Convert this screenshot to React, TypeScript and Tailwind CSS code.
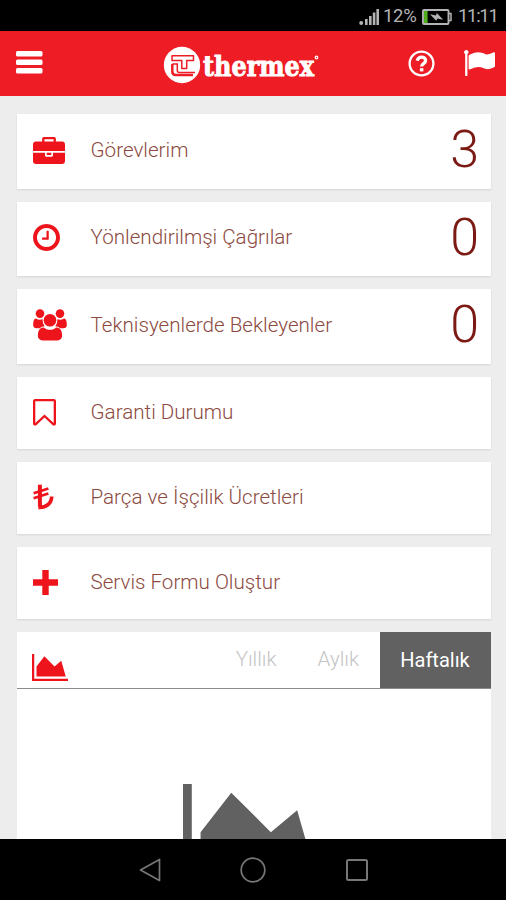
import type { ReactNode } from "react";

interface MenuItem {
  label: string;
  icon: ReactNode;
  count?: number;
}

const BriefcaseIcon = () => (
  <svg width="32" height="27" viewBox="0 0 1792 1536" preserveAspectRatio="none" fill="currentColor">
    <path d="M640 256h512v-128h-512v128zm1152 640v480q0 66-47 113t-113 47h-1472q-66 0-113-47t-47-113v-480h672v160q0 26 19 45t45 19h320q26 0 45-19t19-45v-160h672zm-768 0v128h-256v-128h256zm768-480v384h-1792v-384q0-66 47-113t113-47h352v-160q0-40 28-68t68-28h576q40 0 68 28t28 68v160h352q66 0 113 47t47 113z" />
  </svg>
);

const ClockIcon = () => (
  <svg width="27" height="27" viewBox="128 128 1536 1536" fill="currentColor">
    <path d="M1024 544v448q0 14-9 23t-23 9h-320q-14 0-23-9t-9-23v-64q0-14 9-23t23-9h224v-352q0-14 9-23t23-9h64q14 0 23 9t9 23zm416 352q0-148-73-273t-198-198-273-73-273 73-198 198-73 273 73 273 198 198 273 73 273-73 198-198 73-273zm224 0q0 209-103 385.5t-279.5 279.5-385.5 103-385.5-103-279.5-279.5-103-385.5 103-385.5 279.5-279.5 385.5-103 385.5 103 279.5 279.5 103 385.5z" />
  </svg>
);

const UsersIcon = () => (
  <svg width="34" height="32" viewBox="0 0 34 32" fill="currentColor">
    <circle cx="7" cy="4.6" r="4.3" />
    <circle cx="27" cy="4.6" r="4.3" />
    <circle cx="17" cy="11.3" r="6.3" />
    <path d="M3 9.6C4.200 10.400 5.600 10.800 7 10.800c1 0 1.900-.2 2.700-.5-.2 2.600.5 5 2.100 6.900-2 .1-3.700.8-5 2H3.600C1.500 19.200.2 18.100.2 16.200.2 13.600.6 9.300 3 9.600z" />
    <path d="M31 9.600c-1.200.8-2.600 1.200-4 1.200-1 0-1.900-.2-2.700-.5.2 2.600-.5 5-2.100 6.900 2 .1 3.700.8 5 2h3.200c2.100 0 3.400-1.100 3.400-3 0-2.600-.4-6.900-2.800-6.600z" />
    <path d="M10.800 18.500c1.700 1.500 3.800 2.300 6.200 2.300s4.500-.8 6.200-2.300c4.400-.2 5.900 4 5.900 8.300 0 2.800-1.800 4.600-4.700 4.600H9.600c-2.900 0-4.700-1.800-4.700-4.600 0-4.300 1.500-8.500 5.900-8.300z" />
  </svg>
);

const BookmarkIcon = () => (
  <svg width="23" height="27" viewBox="256 128 1280 1536" preserveAspectRatio="none" fill="currentColor">
    <path d="M1408 256h-1024v1242l423-406 89-85 89 85 423 406v-1242zm12-128q23 0 44 9 33 13 52.500 41t19.500 62v1289q0 34-19.500 62t-52.500 41q-19 8-44 8-48 0-83-32l-441-424-441 424q-36 33-83 33-23 0-44-9-33-13-52.500-41t-19.500-62v-1289q0-34 19.500-62t52.500-41q21-9 44-9h1048z" />
  </svg>
);

const LiraIcon = () => (
  <svg width="21" height="26" viewBox="0 0 21 26" fill="none" stroke="currentColor">
    <path d="M6.900.7v22" strokeWidth="4" />
    <path d="M5.400 23.300C13 23.800 18.600 19.500 18.700 12.500" strokeWidth="3.700" />
    <path d="M.6 9.300L15.400 4.600M.6 14.200L15.400 9.500" strokeWidth="2.600" />
  </svg>
);

const PlusIcon = () => (
  <svg width="25" height="25" viewBox="0 0 25 25" fill="currentColor">
    <path d="M9.300 0h6.400v9.300H25v6.400h-9.300V25H9.300v-9.300H0V9.300h9.300z" />
  </svg>
);

const AreaChartIcon = ({ className }: { className: string }) => (
  <svg className={className} viewBox="0 128 2048 1536" preserveAspectRatio="none" fill="currentColor">
    <path d="M2048 1536v128h-2048v-1536h128v1408h1920zm-384-1024l256 896h-1664v-576l448-576 576 576z" />
  </svg>
);

const counters: MenuItem[] = [
  { label: "Görevlerim", icon: <BriefcaseIcon />, count: 3 },
  { label: "Yönlendirilmşi Çağrılar", icon: <ClockIcon />, count: 0 },
  { label: "Teknisyenlerde Bekleyenler", icon: <UsersIcon />, count: 0 },
];

const links: MenuItem[] = [
  { label: "Garanti Durumu", icon: <BookmarkIcon /> },
  { label: "Parça ve İşçilik Ücretleri", icon: <LiraIcon /> },
  { label: "Servis Formu Oluştur", icon: <PlusIcon /> },
];

function StatusBar() {
  return (
    <div className="flex h-[31px] items-center justify-end bg-black pr-[8px] pt-[2px] text-[#b4b4b4]">
      <svg width="21" height="18" viewBox="0 0 21 18" fill="currentColor">
        <circle cx="2.200" cy="15" r="2" />
        <path d="M6 11h2.600v6H6zM10 8h2.600v9H10zM13.800 4.500h2.600V17h-2.600zM17.400 1H20v16h-2.600z" />
      </svg>
      <span className="ml-[3px] w-[35px] text-[18.500px] leading-none tracking-[-0.3px]">12%</span>
      <svg className="ml-[4px]" width="30" height="16" viewBox="0 0 30 16">
        <rect x="1" y="1" width="25.500" height="14" rx="1" fill="none" stroke="currentColor" strokeWidth="1.900" />
        <path d="M27 4.500h2v7h-2" fill="none" stroke="currentColor" strokeWidth="1.500" />
        <path d="M2 2h3.600v12H2z" fill="#4fae1c" />
        <path d="M8 5.200l6 1.300.8-2.600 6.400 6.800-5.800-1.300-1.200 2.300z" fill="currentColor" />
      </svg>
      <span className="ml-[6px] w-[40px] whitespace-nowrap text-[18.500px] leading-none tracking-[-1.300px]">11:11</span>
    </div>
  );
}

function Header() {
  return (
    <header className="flex h-[65px] items-center bg-[#ee1c25] pl-[16px] pr-[11px] text-white">
      <svg className="mb-[2px]" width="27" height="23" viewBox="0 0 27 23" fill="currentColor">
        <rect y="0" width="26.500" height="5.500" rx="1.500" />
        <rect y="8.500" width="26.500" height="5.500" rx="1.500" />
        <rect y="17" width="26.500" height="5.500" rx="1.500" />
      </svg>
      <div className="ml-[120px] mt-[2px] flex h-[38px] items-center">
        <svg width="38" height="38" viewBox="0 0 38 38">
          <circle cx="19" cy="19" r="18.200" fill="currentColor" />
          <g fill="none" stroke="#ee1c25">
            <path d="M9 9.800h21.500v4.700h-6.800v8h-4.900v-8H9z" strokeWidth="1.500" strokeLinejoin="round" />
            <path d="M9.300 18h5v6.500q0 2 2 2H32" strokeWidth="1.500" />
            <path d="M9.300 18v7.500q0 3.500 3.500 3.500H30" strokeWidth="2.500" />
          </g>
        </svg>
        <svg className="ml-[1px] overflow-visible" width="120" height="38" viewBox="0 0 120 38">
          <text x="1" y="30" fill="currentColor" stroke="currentColor" strokeWidth="0.900" className="font-['DejaVu_Serif',serif] text-[27.500px] font-bold" textLength="111" lengthAdjust="spacingAndGlyphs">
            thermex
          </text>
          <circle cx="114.500" cy="11.500" r="1.300" fill="none" stroke="currentColor" strokeWidth="1.200" />
        </svg>
      </div>
      <div className="mb-[1px] ml-auto flex items-center">
        <svg width="27" height="27" viewBox="0 0 27 27" fill="none" stroke="currentColor">
          <circle cx="13.500" cy="13.500" r="11.900" strokeWidth="2.300" />
          <path d="M9.200 10.700C9.900 8.200 11.400 7.200 13.600 7.200c2.300 0 4 1.400 4 3.300 0 3.300-4 3-4 6.100" strokeWidth="3.300" />
          <path d="M11.900 18.200h3.500v3.200h-3.500z" fill="currentColor" stroke="none" />
        </svg>
        <svg className="ml-[29px]" width="31" height="26" viewBox="64 128 1728 1536" preserveAspectRatio="none" fill="currentColor">
          <path d="M320 256q0 72-64 110v1266q0 13-9.500 22.500t-22.500 9.500h-64q-13 0-22.500-9.500t-9.500-22.500v-1266q-64-38-64-110 0-53 37.500-90.500t90.500-37.500 90.500 37.500 37.500 90.500zm1472 64v763q0 25-12.500 38.500t-39.500 27.500q-215 116-369 116-61 0-123.500-22t-108.500-48-115.500-48-142.500-22q-192 0-464 146-17 9-33 9-26 0-45-19t-19-45v-742q0-32 31-55 21-14 79-43 236-120 421-120 107 0 200 29t219 88q38 19 88 19 54 0 117.500-21t110-47 88-47 54.500-21q26 0 45 19t19 45z" />
        </svg>
      </div>
    </header>
  );
}

function Row({ item, className }: { item: MenuItem; className: string }) {
  return (
    <button className={`flex w-full items-center bg-white pl-[15.500px] pr-[11.500px] text-left shadow-[0_1px_2px_rgba(0,0,0,0.1)] ${className}`}>
      <span className="w-[58px] shrink-0 text-[#ee141c]">{item.icon}</span>
      <span className="flex-1 text-[20.600px] font-light leading-none text-[#8c4a41]">{item.label}</span>
      {item.count !== undefined && (
        <span className="text-[52px] font-light leading-none text-[#7b1a14]">{item.count}</span>
      )}
    </button>
  );
}

export default function App() {
  return (
    <div className="flex h-[900px] w-[506px] flex-col overflow-hidden bg-[#ededed] font-[Roboto,sans-serif]">
      <StatusBar />
      <Header />
      <main className="flex min-h-0 flex-1 flex-col overflow-hidden pl-[17px] pr-[15.500px] pt-[18px]">
        <div className="flex flex-col gap-[13px]">
          {counters.map((item) => (
            <Row key={item.label} item={item} className="h-[74.500px] pb-[2px]" />
          ))}
        </div>
        <div className="mt-[13px] flex flex-col gap-[13px]">
          {links.map((item) => (
            <Row key={item.label} item={item} className="h-[72px] pb-px" />
          ))}
        </div>
        {/* statistics panel */}
        <section className="mt-[13px] flex min-h-0 flex-1 flex-col bg-white">
          <div className="flex h-[57px] shrink-0 items-stretch border-b-[1.500px] border-[#8c8c8c] pl-[15px] text-[20.600px] font-light text-[#c4c4c4]">
            <span className="mr-auto flex items-center pt-[15px] text-[#ee141c]">
              <AreaChartIcon className="h-[27px] w-[36px]" />
            </span>
            <span className="flex items-center px-[20.500px]">Yıllık</span>
            <span className="flex items-center px-[20.500px]">Aylık</span>
            <span className="flex w-[111px] items-center justify-center bg-[#616161] text-[20px] font-normal text-white">Haftalık</span>
          </div>
          <div className="min-h-0 flex-1 overflow-hidden pl-[166px] pt-[95px] text-[#616161]">
            <AreaChartIcon className="h-[105px] w-[140.500px]" />
          </div>
        </section>
      </main>
      <nav className="flex h-[61px] shrink-0 items-center justify-between bg-black pl-[139px] pr-[137px] text-[#777777]">
        <svg width="22" height="24" viewBox="0 0 22 24" fill="none" stroke="currentColor" strokeWidth="1.700" strokeLinejoin="round">
          <path d="M1.500 12L20.500 1.500v21z" />
        </svg>
        <svg width="26" height="26" viewBox="0 0 26 26" fill="none" stroke="currentColor" strokeWidth="1.700">
          <circle cx="13" cy="13" r="11.800" />
        </svg>
        <svg width="24" height="24" viewBox="0 0 24 24" fill="none" stroke="currentColor" strokeWidth="2">
          <rect x="2" y="2" width="20" height="20" rx="1.500" />
        </svg>
      </nav>
    </div>
  );
}
